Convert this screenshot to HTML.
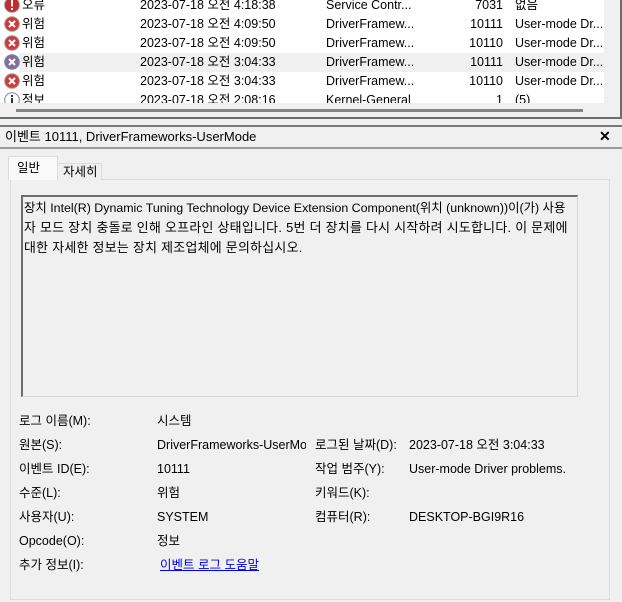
<!DOCTYPE html>
<html><head><meta charset="utf-8"><style>
*{margin:0;padding:0;box-sizing:border-box}
body{width:622px;height:602px;background:#f0f0f0;font-family:"Liberation Sans","Noto Sans CJK KR",sans-serif;font-size:12.5px;line-height:16px;color:#000;position:relative;overflow:hidden}
.a{position:absolute;white-space:nowrap;line-height:16px}
.list{position:absolute;left:0;top:0;width:604px;height:103px;background:#fff;overflow:hidden}
.row{position:absolute;left:0;width:604px;height:19px;line-height:19px}
.row span{position:absolute;top:0}
.ic{position:absolute;left:4px;top:1px;width:16px;height:16px}
</style></head><body>
<div class="list">
<div class="row" style="top:-4px"><svg class="ic" viewBox="0 0 16 16"><circle cx="8" cy="8" r="7.3" fill="#c62a2a" stroke="#888"/><rect x="7" y="3" width="2" height="6.5" fill="#fff"/><rect x="7" y="11" width="2" height="2" fill="#fff"/></svg><span style="left:22px">오류</span><span style="left:140px">2023-07-18 오전 4:18:38</span><span style="left:326px">Service Contr...</span><span style="left:470px;width:33px;text-align:right">7031</span><span style="left:515px">없음</span></div>
<div class="row" style="top:15px"><svg class="ic" viewBox="0 0 16 16"><circle cx="8" cy="8" r="7.3" fill="#d23a3a" stroke="#999"/><path d="M5 5L11 11M11 5L5 11" stroke="#fff" stroke-width="2"/></svg><span style="left:22px">위험</span><span style="left:140px">2023-07-18 오전 4:09:50</span><span style="left:326px">DriverFramew...</span><span style="left:460px;width:43px;text-align:right">10111</span><span style="left:515px">User-mode Dr...</span></div>
<div class="row" style="top:34px"><svg class="ic" viewBox="0 0 16 16"><circle cx="8" cy="8" r="7.3" fill="#d23a3a" stroke="#999"/><path d="M5 5L11 11M11 5L5 11" stroke="#fff" stroke-width="2"/></svg><span style="left:22px">위험</span><span style="left:140px">2023-07-18 오전 4:09:50</span><span style="left:326px">DriverFramew...</span><span style="left:460px;width:43px;text-align:right">10110</span><span style="left:515px">User-mode Dr...</span></div>
<div class="row" style="top:53px;background:linear-gradient(90deg,#fff 19px,#f0f0f0 19px)"><svg class="ic" viewBox="0 0 16 16"><circle cx="8" cy="8" r="7.3" fill="#8a6a9a" stroke="#6a8aaa"/><path d="M5 5L11 11M11 5L5 11" stroke="#fff" stroke-width="2"/></svg><span style="left:22px">위험</span><span style="left:140px">2023-07-18 오전 3:04:33</span><span style="left:326px">DriverFramew...</span><span style="left:460px;width:43px;text-align:right">10111</span><span style="left:515px">User-mode Dr...</span></div>
<div class="row" style="top:72px"><svg class="ic" viewBox="0 0 16 16"><circle cx="8" cy="8" r="7.3" fill="#d23a3a" stroke="#999"/><path d="M5 5L11 11M11 5L5 11" stroke="#fff" stroke-width="2"/></svg><span style="left:22px">위험</span><span style="left:140px">2023-07-18 오전 3:04:33</span><span style="left:326px">DriverFramew...</span><span style="left:460px;width:43px;text-align:right">10110</span><span style="left:515px">User-mode Dr...</span></div>
<div class="row" style="top:91px"><svg class="ic" viewBox="0 0 16 16"><circle cx="8" cy="8" r="7.3" fill="#fff" stroke="#888"/><rect x="7" y="6" width="2" height="7" fill="#235"/><rect x="7" y="3" width="2" height="2" fill="#235"/></svg><span style="left:22px">정보</span><span style="left:140px">2023-07-18 오전 2:08:16</span><span style="left:326px">Kernel-General</span><span style="left:460px;width:43px;text-align:right">1</span><span style="left:515px">(5)</span></div>
</div>
<div class="a" style="left:16px;top:109px;width:567px;height:3px;background:#858585"></div>
<div class="a" style="left:620px;top:0;width:2px;height:119px;background:#6d6d6d"></div>
<div class="a" style="left:0;top:117px;width:622px;height:2px;background:#6d6d6d"></div>
<div class="a" style="left:0;top:125px;width:622px;height:2px;background:#7a7a7a"></div>
<div class="a" style="left:5px;top:129px;font-size:13px">이벤트 10111, DriverFrameworks-UserMode</div>
<div class="a" style="left:599px;top:128px;font-size:14px;font-weight:bold">✕</div>
<div class="a" style="left:0;top:147px;width:622px;height:2px;background:#9a9a9a"></div>
<div class="a" style="left:10px;top:179px;width:600px;height:421px;background:#f0f0f0;border:1px solid #dcdcdc"></div>
<div class="a" style="left:8px;top:156px;width:50px;height:24px;background:#f9f9f9;border:1px solid #dcdcdc;border-bottom:none;padding:3px 0 0 8px">일반</div>
<div class="a" style="left:57px;top:163px;width:45px;height:17px;background:#f0f0f0;border:1px solid #dcdcdc;border-bottom:none;padding:1px 0 0 5px;line-height:15px">자세히</div>
<div class="a" style="left:21px;top:195px;width:557px;height:202px;background:#f0f0f0;border:1px solid #d8d8d8;border-left:2px solid #6d6d6d;border-top:2px solid #6d6d6d"></div>
<div class="a" style="left:24px;top:200px;font-size:12.4px">장치 Intel(R) Dynamic Tuning Technology Device Extension Component(위치 (unknown))이(가) 사용</div>
<div class="a" style="left:24px;top:220px;font-size:12.9px;letter-spacing:0.3px">자 모드 장치 충돌로 인해 오프라인 상태입니다. 5번 더 장치를 다시 시작하려 시도합니다. 이 문제에</div>
<div class="a" style="left:24px;top:240px;font-size:12.9px;letter-spacing:0.3px">대한 자세한 정보는 장치 제조업체에 문의하십시오.</div>
<div class="a" style="left:19px;top:413px">로그 이름(M):</div><div class="a" style="left:157px;top:413px">시스템</div>
<div class="a" style="left:19px;top:437px">원본(S):</div><div class="a" style="left:157px;top:437px;width:149px;overflow:hidden">DriverFrameworks-UserMode</div>
<div class="a" style="left:315px;top:437px">로그된 날짜(D):</div><div class="a" style="left:409px;top:437px">2023-07-18 오전 3:04:33</div>
<div class="a" style="left:19px;top:461px">이벤트 ID(E):</div><div class="a" style="left:157px;top:461px">10111</div>
<div class="a" style="left:315px;top:461px">작업 범주(Y):</div><div class="a" style="left:409px;top:461px">User-mode Driver problems.</div>
<div class="a" style="left:19px;top:485px">수준(L):</div><div class="a" style="left:157px;top:485px">위험</div>
<div class="a" style="left:315px;top:485px">키워드(K):</div>
<div class="a" style="left:19px;top:509px">사용자(U):</div><div class="a" style="left:157px;top:509px">SYSTEM</div>
<div class="a" style="left:315px;top:509px">컴퓨터(R):</div><div class="a" style="left:409px;top:509px">DESKTOP-BGI9R16</div>
<div class="a" style="left:19px;top:533px">Opcode(O):</div><div class="a" style="left:157px;top:533px">정보</div>
<div class="a" style="left:19px;top:557px">추가 정보(I):</div><div class="a" style="left:160px;top:557px;color:#0000ee;text-decoration:underline">이벤트 로그 도움말</div>
</body></html>
